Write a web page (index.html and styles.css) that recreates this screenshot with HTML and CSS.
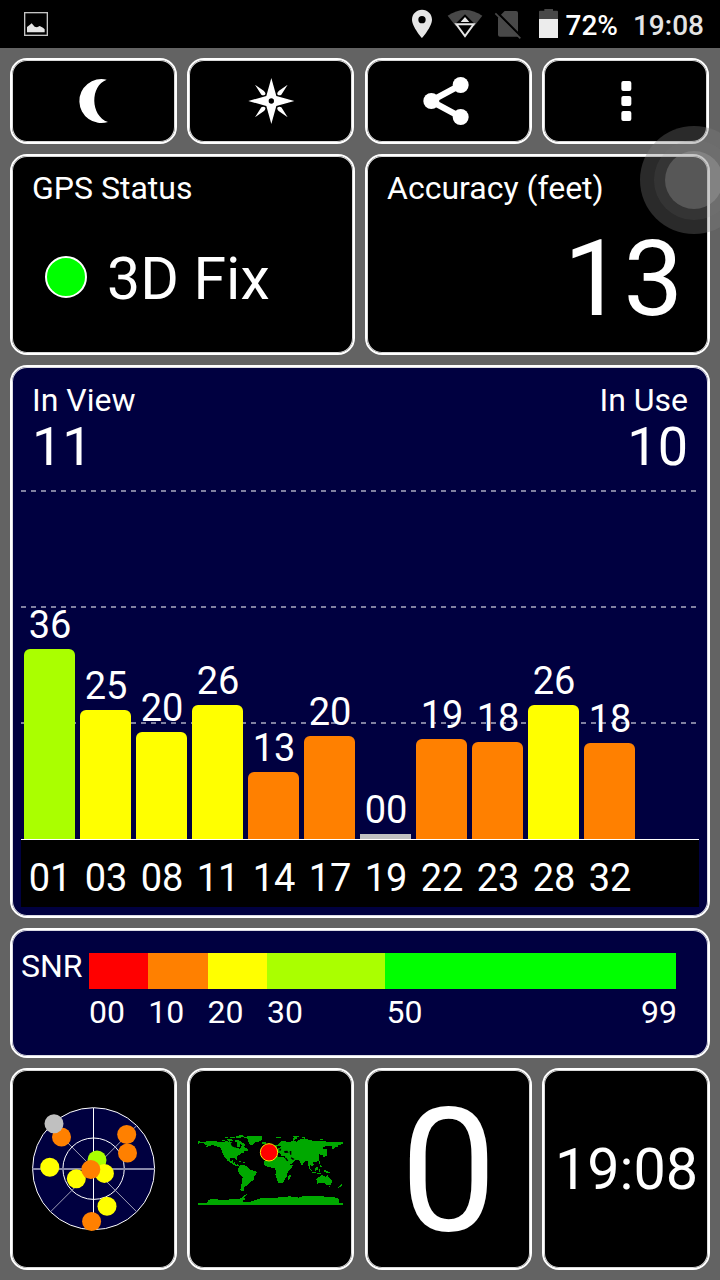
FILE: index.html
```html
<!DOCTYPE html>
<html lang="en">
<head>
<meta charset="utf-8">
<title>GPS Test</title>
<link rel="stylesheet" href="styles.css">
</head>
<body>
<header class="status-bar">
  <svg class="shot-icon" viewBox="72 36 72 72"><rect x="74" y="38" width="68" height="68" fill="none" stroke="#c4c4c4" stroke-width="4"/><path d="M81 97V81L88 76L95 70L104 80L111 82L119 78L129 83L134 88V97Z" fill="#e4e4e4"/></svg>
  <div class="tray">
    <svg class="i-pin" viewBox="150 0 72 144"><path fill="#e6e6e6" fill-rule="evenodd" d="M186 29C169 29 156 42 156 59C156 80 186 114 186 114S216 80 216 59C216 42 203 29 186 29ZM186 48A11 11 0 1 1 186 70A11 11 0 1 1 186 48Z"/></svg>
    <svg class="i-wifi" viewBox="258 0 114 144"><path fill="#484848" d="M263 47Q315 13 367 47L343 78H287Z"/><path fill="#000" d="M315 43L345 73L315 114L285 73Z"/><path fill="#e6e6e6" d="M315 51L328 66H302Z"/><path d="M289 73H341L315 108Z" fill="none" stroke="#e6e6e6" stroke-width="6"/></svg>
    <svg class="i-sim" viewBox="402 0 84 144"><path fill="#484848" d="M434 33H468Q474 33 474 39V110H420Q414 110 414 104V53Z"/><path d="M410 36L484 110" stroke="#000" stroke-width="7"/><path d="M406 40L481 115" stroke="#484848" stroke-width="5"/></svg>
    <svg class="i-batt" viewBox="534 0 66 144"><path fill="#484848" d="M537 57V35Q537 32 540 32H553V27H579V32H591Q594 32 594 35V57Z"/><path fill="#ececec" d="M537 57H594V114H537Z"/></svg>
    <span class="percent">72%</span>
    <span class="clock">19:08</span>
  </div>
</header>
<main class="dash">
  <nav class="row four">
    <button class="card tool" aria-label="Night mode"><svg viewBox="208 231 144 144"><path d="M318 239C268 257 268 347 322 366A66 66 0 1 1 318 239Z"/></svg></button>
    <button class="card tool" aria-label="Compass"><svg viewBox="740 231 144 144"><path fill-rule="evenodd" d="M813 234L828 288L882 303L828 318L813 372L798 318L744 303L798 288ZM813 295A8 8 0 1 0 813 311A8 8 0 1 0 813 295Z"/><path d="M764 254L790 272Q798 279 794 284Q788 287 783 284ZM862 254L836 272Q828 279 832 284Q838 287 843 284ZM764 352L790 334Q798 327 794 322Q788 319 783 322ZM862 352L836 334Q828 327 832 322Q838 319 843 322Z"/></svg></button>
    <button class="card tool" aria-label="Share"><svg viewBox="194 231 144 144"><path d="M301 255L212 303L301 351" fill="none" stroke="#fff" stroke-width="19"/><circle cx="213" cy="303" r="24"/><circle cx="301" cy="255" r="24"/><circle cx="301" cy="351" r="24"/></svg></button>
    <button class="card tool" aria-label="Menu"><svg viewBox="725 231 144 144"><rect x="783" y="243" width="30" height="30" rx="6"/><rect x="783" y="288" width="30" height="30" rx="6"/><rect x="783" y="333" width="30" height="30" rx="6"/></svg></button>
  </nav>
  <section class="row">
    <div class="card info">
      <div class="label">GPS Status</div>
      <div class="fix"><span class="led"></span><span>3D Fix</span></div>
    </div>
    <div class="card info">
      <div class="label">Accuracy (feet)</div>
      <div class="accuracy">13</div>
    </div>
  </section>
  <section class="card chart">
    <div class="counts">
      <div><div class="label">In View</div><div class="count">11</div></div>
      <div class="right"><div class="label">In Use</div><div class="count">10</div></div>
    </div>
    <div class="plot">
      <div class="col"><span>36</span><i class="bar lime" style="height:190px"></i></div>
      <div class="col"><span>25</span><i class="bar yellow" style="height:129px"></i></div>
      <div class="col"><span>20</span><i class="bar yellow" style="height:107px"></i></div>
      <div class="col"><span>26</span><i class="bar yellow" style="height:134px"></i></div>
      <div class="col"><span>13</span><i class="bar orange" style="height:67px"></i></div>
      <div class="col"><span>20</span><i class="bar orange" style="height:103px"></i></div>
      <div class="col"><span>00</span><i class="bar none" style="height:5px"></i></div>
      <div class="col"><span>19</span><i class="bar orange" style="height:100px"></i></div>
      <div class="col"><span>18</span><i class="bar orange" style="height:97px"></i></div>
      <div class="col"><span>26</span><i class="bar yellow" style="height:134px"></i></div>
      <div class="col"><span>18</span><i class="bar orange" style="height:96px"></i></div>
    </div>
    <div class="ids"><span>01</span><span>03</span><span>08</span><span>11</span><span>14</span><span>17</span><span>19</span><span>22</span><span>23</span><span>28</span><span>32</span></div>
  </section>
  <section class="card snr">
    <div class="label snr-name">SNR</div>
    <div class="scale">
      <div class="band"><i class="red"></i><i class="orange"></i><i class="yellow"></i><i class="lime wide"></i><i class="green"></i></div>
      <div class="ticks label"><span>00</span><span>10</span><span>20</span><span class="wide">30</span><span class="last"><b>50</b><b>99</b></span></div>
    </div>
  </section>
  <section class="row four bottom">
    <div class="card tile">
      <svg class="sky" viewBox="30 1105 127 127">
        <circle cx="93.6" cy="1168.7" r="61" fill="#000040" stroke="#fff"/>
        <circle cx="93.6" cy="1168.7" r="30.7" fill="none" stroke="#fff"/>
        <path d="M50.5 1125.6L136.7 1211.8M136.7 1125.6L50.5 1211.8" stroke="#a0a0b8"/>
        <path d="M32.5 1169H154.5" stroke="#8888aa" stroke-width="2"/>
        <path d="M93.5 1108V1230" stroke="#fff"/>
        <g fill="#ff8000"><circle cx="61.5" cy="1137" r="9.5"/><circle cx="126.7" cy="1134.5" r="9.5"/><circle cx="127.5" cy="1153" r="9.5"/></g>
        <g fill="#ff0"><circle cx="49.8" cy="1167.3" r="9.5"/><circle cx="76.3" cy="1178.8" r="9.5"/><circle cx="107" cy="1206.2" r="9.5"/></g>
        <circle cx="97" cy="1160" r="9.5" fill="#af0"/>
        <circle cx="104.4" cy="1173.4" r="9.5" fill="#ff0"/>
        <circle cx="90.8" cy="1169.5" r="9.5" fill="#ff8000"/>
        <circle cx="91.6" cy="1221.5" r="9.5" fill="#ff8000"/>
        <circle cx="54" cy="1123.7" r="9.5" fill="#c0c0c0"/>
      </svg>
    </div>
    <div class="card tile">
      <svg class="map" viewBox="21 38 441 222">
        <g fill="#00a800" shape-rendering="crispEdges">
          <path d="M24 60L36 66L48 64L56 61L76 63L96 65L110 63L126 66L134 69L136 75L140 84L146 83L150 90L153 76L160 74L166 82L176 89L169 93L163 93L163 98L155 99L146 105L140 111L143 120L137 118L134 112L124 112L119 114L120 124L128 120L130 127L135 126L138 134L149 134L146 138L136 137L128 131L119 126L112 121L103 108L98 101L96 91L90 82L80 78L66 74L54 79L42 83L51 76L42 71L44 67L24 70Z"/>
          <path d="M94 58H106V63H96ZM110 56L124 57L130 62L118 64ZM120 50H134V54H122ZM137 46L156 45L166 47L152 52L140 54ZM136 58L148 61L160 68L168 75L160 77L150 70L136 64ZM142 65H150V80H142ZM106 51H114V54H106Z"/>
          <path d="M162 51L174 48L194 46L216 47V58L207 64L194 67L187 76L180 72L174 63L172 55ZM215 65H227V71H217Z"/>
          <path d="M147 136L159 133L170 138L176 144L185 150L198 152L201 157L194 166L191 179L182 184L178 190L173 194L164 198L161 206L162 212L151 210L153 196L157 180L158 169L149 162L144 152Z"/>
          <path d="M143 120L152 122L156 126H149ZM158 125H165V128H158ZM140 130H145V135H140Z"/>
          <path d="M222 124L230 114L242 109L262 107L267 111L280 111L288 115L296 128L302 134L310 134L303 145L293 154L292 166L285 174L282 183L276 188L265 189L260 175L256 164L258 152L252 142L234 141L224 135Z"/>
          <path d="M249 102L249 94L262 94L258 87L268 82L276 77L268 78L261 75L268 67L279 61L291 65L300 65L310 60L320 64L330 57L344 54L360 59L378 63L398 62L416 65L438 64L459 66V71L446 74L443 80L434 81L428 89L425 77L410 78L400 79L398 86L410 87L411 98L400 104L393 105L387 99L386 109L388 120L378 125L368 125L372 133L366 138L360 132L360 145L356 140L354 124L347 121L339 128L337 138L331 126L325 119L311 118L315 121L306 130L297 133L287 116L285 108L275 108L270 99L262 98L257 104Z"/>
          <path d="M254 73H260V84H254ZM248 79H252V84H248ZM257 50H272V54H260ZM309 52L320 49V55L308 60ZM310 47H326V50H310ZM335 49H346V53H335ZM390 55H400V58H390ZM404 97L414 100L408 108L401 110L398 107ZM388 123H391V131H388Z"/>
          <path d="M357 141L367 150L366 154L356 145ZM374 145L383 139L384 148L376 151ZM366 154H379V157H366ZM386 147H391V154H386ZM390 134L396 140H391ZM400 148L413 152L424 159H412L402 153ZM382 157H394V160H382Z"/>
          <path d="M299 164L303 166L300 176L294 179L294 170Z"/>
          <path d="M379 175L388 170L394 165L404 166L407 170L412 163L416 172L426 181L424 192L417 196L408 192L401 187L392 188L382 190ZM416 198H420V201H416ZM453 191L457 195L446 203L443 202Z"/>
          <path d="M24 249H51L55 239L66 235L86 238L106 239L126 236L146 236L156 231L162 225L171 222L163 230L165 238L151 243L179 245L199 238L214 233L250 233L276 230L301 228L326 232L338 228L366 227L398 228L426 231L444 232L448 239L446 247L459 249V255H24Z"/>
        </g>
        <path fill="#000" d="M126 66L139 67L140 76L136 82L126 78L122 70ZM268 85H274L272 91H268ZM282 92L292 91L296 97L284 98ZM299 92H304V103H300ZM284 112L289 112L295 121L291 123ZM304 111L314 116L309 119L302 114Z"/>
        <circle cx="237" cy="96" r="26" fill="#f00" stroke="#ffe800" stroke-width="3"/>
      </svg>
    </div>
    <div class="card tile speed">0</div>
    <div class="card tile time">19:08</div>
  </section>
</main>
<div class="assist"><div class="assist-mid"><div class="assist-core"></div></div></div>
</body>
</html>
```
FILE: styles.css
```css
* { box-sizing: border-box; }
body {
  margin: 0;
  width: 720px;
  height: 1280px;
  position: relative;
  overflow: hidden;
  background: #636363;
  color: #fff;
  font-family: Roboto, "Liberation Sans", sans-serif;
}
svg { display: block; }

.status-bar {
  display: flex;
  justify-content: space-between;
  height: 48px;
  padding: 0 16px 0 24px;
  background: #000;
}
.shot-icon { width: 24px; height: 24px; margin-top: 12px; }
.tray {
  display: flex;
  font-size: 28px;
  font-weight: 500;
  line-height: 51px;
  color: #e4e4e4;
}
.tray svg { height: 48px; }
.i-pin { width: 24px; margin-right: 12px; }
.i-wifi { width: 38px; margin-right: 10px; }
.i-sim { width: 28px; margin-right: 16px; }
.i-batt { width: 22px; margin-right: 6px; }
.percent { color: #fff; margin-right: 15px; }

.dash {
  display: grid;
  grid-template-rows: 86px 201px 553px 130px 202px;
  row-gap: 10px;
  padding: 10px;
}
.row { display: flex; gap: 10px; }
.card {
  border: 2px solid #fff;
  border-radius: 17px;
  background: #000;
  box-shadow: inset 0 0 0 1px rgba(255, 255, 255, .85);
  min-width: 0;
}
.info { width: 345px; }
.four .card { width: 167px; }
.four .card:nth-child(2) { margin-right: 1px; }
.bottom .card:last-child { width: 168px; }

.tool {
  display: flex;
  align-items: center;
  justify-content: center;
  padding: 0;
}
.tool svg { width: 48px; height: 48px; fill: #fff; overflow: visible; }

.label { font-size: 32px; line-height: 32px; }
.info { padding: 16px 25px 0 20px; white-space: nowrap; }
.fix {
  display: flex;
  gap: 20px;
  margin-top: 46px;
  padding-left: 13px;
  font-size: 59px;
  line-height: 58px;
}
.led {
  width: 42px;
  height: 42px;
  margin-top: 6px;
  border: 2px solid #fff;
  border-radius: 50%;
  background: #0f0;
}
.accuracy {
  margin-top: 22px;
  font-size: 106px;
  line-height: 106px;
  text-align: right;
}

.chart { background: #000040; padding: 17px 9px 0; }
.counts {
  display: flex;
  justify-content: space-between;
  height: 90px;
  padding: 0 11px;
}
.count { margin-top: 4px; font-size: 54px; line-height: 54px; }
.right { text-align: right; }
.plot {
  display: flex;
  align-items: flex-end;
  gap: 5px;
  height: 366px;
  padding-left: 3px;
  border-bottom: 1px solid #fff;
  background-image:
    repeating-linear-gradient(90deg, #8080a0 0 5px, transparent 5px 10px),
    repeating-linear-gradient(90deg, #8080a0 0 5px, transparent 5px 10px),
    repeating-linear-gradient(90deg, #8080a0 0 5px, transparent 5px 10px);
  background-size: 676px 2px;
  background-position: 0 16px, 0 132px, 0 248px;
  background-repeat: no-repeat;
}
.col {
  width: 51px;
  font-size: 38px;
  line-height: 38px;
}
.col span { display: block; padding-left: 1px; text-align: center; }
.bar { display: block; margin-top: 5px; border-radius: 6px 6px 0 0; }
.ids {
  display: flex;
  gap: 5px;
  height: 67px;
  padding: 19px 0 0 3px;
  background: #000;
  font-size: 38px;
  line-height: 38px;
}
.ids span { width: 51px; padding-left: 1px; text-align: center; }

.red { background: #f00; }
.orange { background: #ff8000; }
.yellow { background: #ff0; }
.lime { background: #af0; }
.green { background: #0f0; }
.none { background: #c0c0c0; border-radius: 0; }

.snr { display: flex; background: #000040; padding: 20px 32px 0 9px; }
.snr-name { width: 68px; }
.scale { flex: 1; padding-top: 3px; }
.band { display: flex; height: 36px; }
.band i { flex: 10; }
.band .wide { flex: 20; }
.band .green { flex: 49; }
.ticks { display: flex; margin: 7px -1px 0 0; }
.ticks span { flex: 10 1 0; }
.ticks .wide { flex: 20 1 0; }
.ticks .last { display: flex; justify-content: space-between; flex: 49 1 0; padding-left: 1px; }
.ticks b { font-weight: 400; }

.tile { display: flex; align-items: center; justify-content: center; }
.sky { width: 127px; height: 127px; margin-bottom: 1px; }
.map { width: 147px; height: 74px; margin-top: 2px; }
.speed { font-size: 172px; line-height: 202px; padding-top: 4px; }
.time { font-size: 57.5px; padding-left: 1px; }

.assist, .assist-mid, .assist-core { display: grid; place-items: center; border-radius: 50%; }
.assist {
  position: absolute;
  left: 640px;
  top: 126px;
  width: 108px;
  height: 108px;
  background: rgba(128, 128, 128, .33);
}
.assist-mid { width: 80px; height: 80px; background: rgba(128, 128, 128, .12); }
.assist-core { width: 58px; height: 58px; background: rgba(190, 190, 190, .25); }
```
